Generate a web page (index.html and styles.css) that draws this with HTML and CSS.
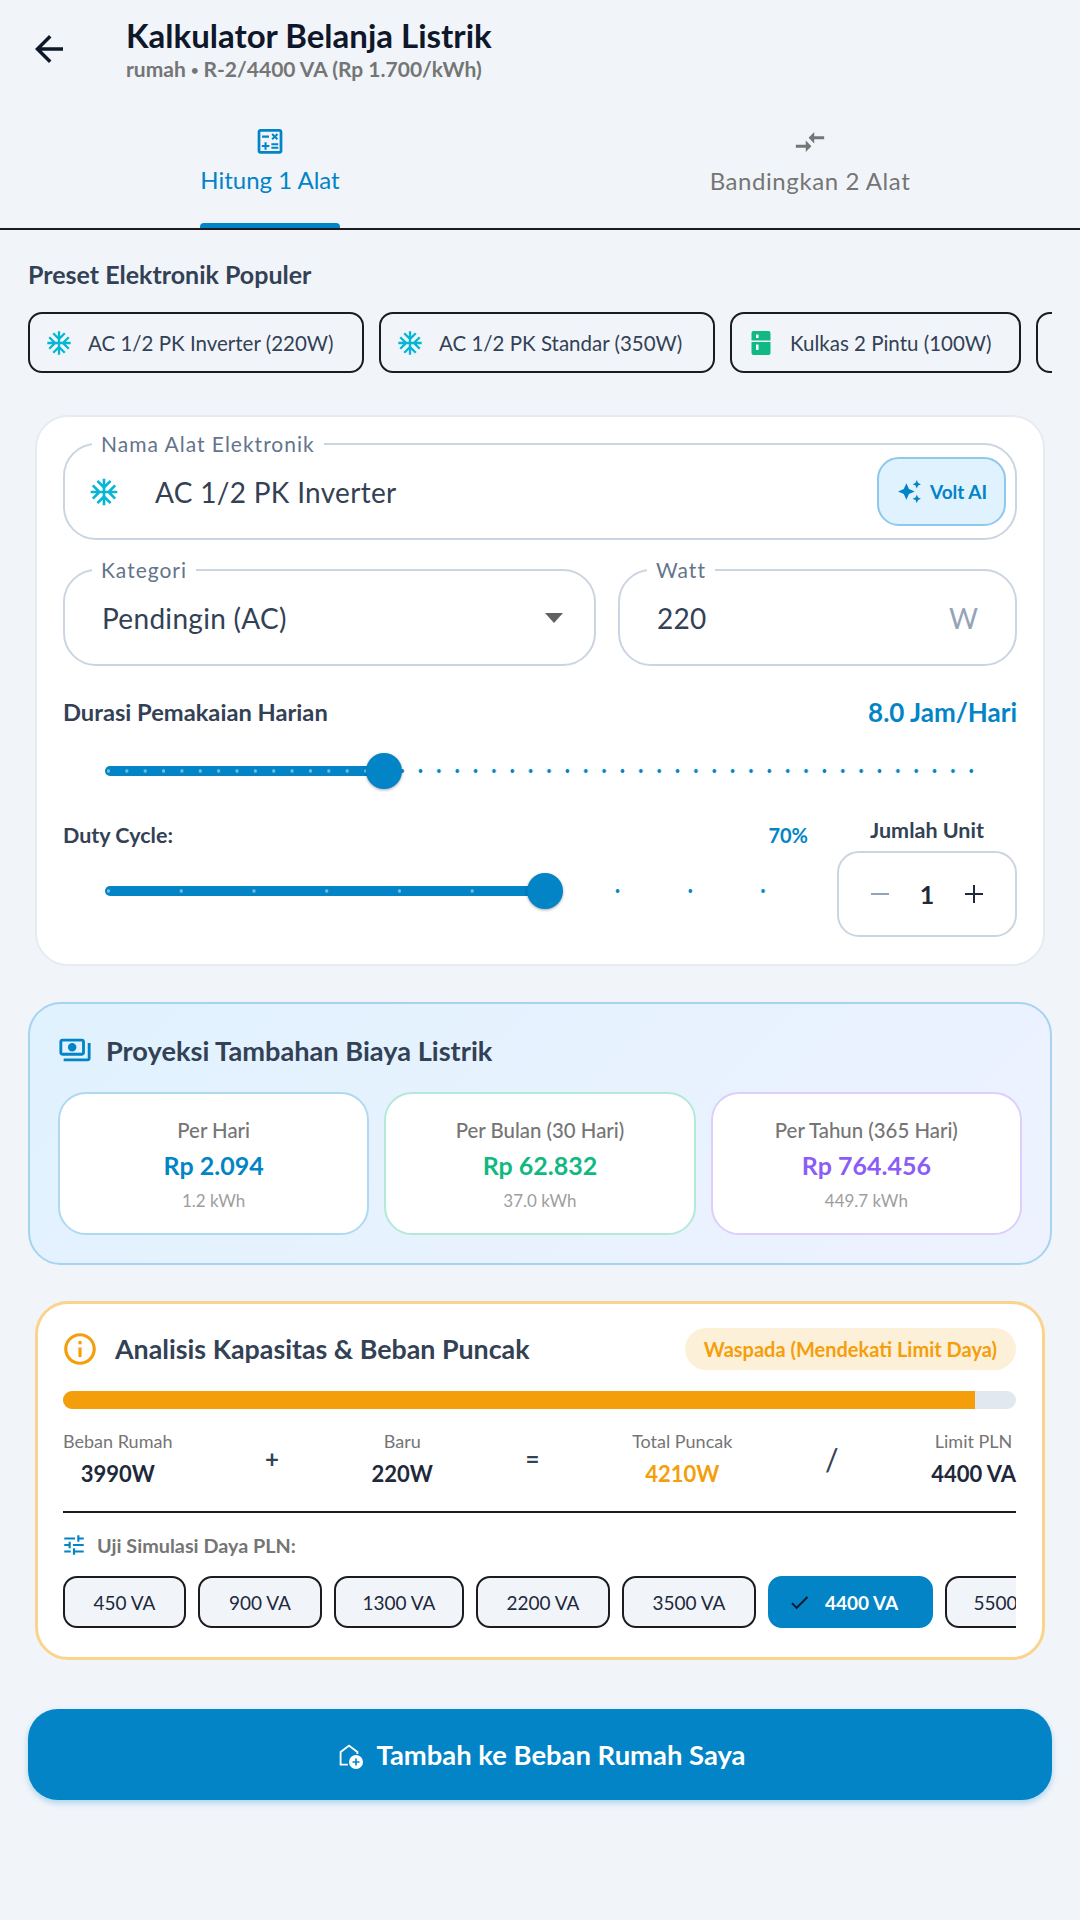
FILE: index.html
```html
<!DOCTYPE html>
<html lang="id">
<head>
    <meta charset="UTF-8">
    <meta name="viewport" content="width=device-width, initial-scale=1.0">
    <title>Kalkulator Belanja Listrik</title>
    <link rel="stylesheet" href="styles.css">
</head>
<body>
    <header class="app-bar">
        <svg class="back-icon" viewBox="0 0 24 24"><path d="M20 11H7.83l5.59-5.59L12 4l-8 8 8 8 1.41-1.41L7.83 13H20v-2z"/></svg>
        <div>
            <h1 class="app-title">Kalkulator Belanja Listrik</h1>
            <div class="app-subtitle">rumah <span class="dot">•</span> R-2/4400 VA (Rp 1.700/kWh)</div>
        </div>
    </header>

    <nav class="tabs">
        <div class="tab tab-active">
            <svg class="tab-icon" viewBox="0 0 24 24"><path d="M19 3H5c-1.1 0-2 .9-2 2v14c0 1.1.9 2 2 2h14c1.1 0 2-.9 2-2V5c0-1.1-.9-2-2-2zm0 16H5V5h14v14zM6.25 7.72h5v1.5h-5zM13 15.75h5v1.5h-5zm0-2.5h5v1.5h-5zM8 18h1.5v-2h2v-1.5h-2v-2H8v2H6V16h2zm6.09-7.05 1.41-1.41 1.41 1.41 1.06-1.06-1.41-1.42 1.41-1.41L16.91 6 15.5 7.41 14.09 6l-1.06 1.06 1.41 1.41-1.41 1.42z"/></svg>
            <span class="tab-label">Hitung 1 Alat</span>
        </div>
        <div class="tab">
            <svg class="tab-icon" viewBox="0 0 24 24"><path d="M9.01 14H2v2h7.01v3L13 15l-3.99-4v3zm5.98-1v-3H22V8h-7.01V5L11 9l3.99 4z"/></svg>
            <span class="tab-label">Bandingkan 2 Alat</span>
        </div>
    </nav>

    <main class="content">
        <h2 class="section-title">Preset Elektronik Populer</h2>
        <div class="preset-row">
            <div class="preset-chip chip-ac">
                <svg class="icon-snow" viewBox="0 0 24 24"><path d="M22 11h-4.17l3.24-3.24-1.41-1.42L15 11h-2V9l4.66-4.66-1.42-1.41L13 6.17V2h-2v4.17L7.76 2.93 6.34 4.34 11 9v2H9L4.34 6.34 2.93 7.76 6.17 11H2v2h4.17l-3.24 3.24 1.41 1.42L9 13h2v2l-4.66 4.66 1.42 1.41L11 17.83V22h2v-4.17l3.24 3.24 1.42-1.41L13 15v-2h2l4.66 4.66 1.41-1.42L17.83 13H22z"/></svg>
                AC 1/2 PK Inverter (220W)
            </div>
            <div class="preset-chip chip-ac">
                <svg class="icon-snow" viewBox="0 0 24 24"><path d="M22 11h-4.17l3.24-3.24-1.41-1.42L15 11h-2V9l4.66-4.66-1.42-1.41L13 6.17V2h-2v4.17L7.76 2.93 6.34 4.34 11 9v2H9L4.34 6.34 2.93 7.76 6.17 11H2v2h4.17l-3.24 3.24 1.41 1.42L9 13h2v2l-4.66 4.66 1.42 1.41L11 17.83V22h2v-4.17l3.24 3.24 1.42-1.41L13 15v-2h2l4.66 4.66 1.41-1.42L17.83 13H22z"/></svg>
                AC 1/2 PK Standar (350W)
            </div>
            <div class="preset-chip chip-fridge">
                <svg class="icon-fridge" viewBox="0 0 19 24"><path fill-rule="evenodd" d="M2 0h15a2 2 0 0 1 2 2v7.5H0V2a2 2 0 0 1 2-2zm2.5 3.5V7h2.6V3.5zM0 11h19v11a2 2 0 0 1-2 2H2a2 2 0 0 1-2-2zm4.5 2.5V19h2.6v-5.5z"/></svg>
                Kulkas 2 Pintu (100W)
            </div>
            <div class="preset-chip chip-ac"></div>
        </div>

        <section class="card form-card">
            <div class="field">
                <span class="field-label">Nama Alat Elektronik</span>
                <svg class="field-snow" viewBox="0 0 24 24"><path d="M22 11h-4.17l3.24-3.24-1.41-1.42L15 11h-2V9l4.66-4.66-1.42-1.41L13 6.17V2h-2v4.17L7.76 2.93 6.34 4.34 11 9v2H9L4.34 6.34 2.93 7.76 6.17 11H2v2h4.17l-3.24 3.24 1.41 1.42L9 13h2v2l-4.66 4.66 1.42 1.41L11 17.83V22h2v-4.17l3.24 3.24 1.42-1.41L13 15v-2h2l4.66 4.66 1.41-1.42L17.83 13H22z"/></svg>
                <span class="field-value">AC 1/2 PK Inverter</span>
                <div class="volt-btn">
                    <svg viewBox="0 0 24 24"><path d="M19 9l1.25-2.75L23 5l-2.75-1.25L19 1l-1.25 2.75L15 5l2.75 1.25L19 9zm-7.5.5L9 4 6.5 9.5 1 12l5.5 2.5L9 20l2.5-5.5L17 12l-5.5-2.5zM19 15l-1.25 2.75L15 19l2.75 1.25L19 23l1.25-2.75L23 19l-2.75-1.25L19 15z"/></svg>
                    Volt AI
                </div>
            </div>

            <div class="field-row">
                <div class="field field-category">
                    <span class="field-label">Kategori</span>
                    <span class="field-value">Pendingin (AC)</span>
                    <span class="caret"></span>
                </div>
                <div class="field field-watt">
                    <span class="field-label">Watt</span>
                    <span class="field-value">220</span>
                    <span class="field-unit">W</span>
                </div>
            </div>

            <div class="duration-head">
                <span class="slider-title">Durasi Pemakaian Harian</span>
                <span class="duration-value">8.0 Jam/Hari</span>
            </div>
            <div class="slider slider-hours">
                <div class="slider-fill" style="width: 279px"><div class="slider-thumb"></div></div>
            </div>

            <div class="duty-row">
                <div class="duty-col">
                    <div class="duty-head">
                        <span class="duty-title">Duty Cycle:</span>
                        <span class="duty-value">70%</span>
                    </div>
                    <div class="slider slider-duty">
                        <div class="slider-fill" style="width: 440px"><div class="slider-thumb"></div></div>
                    </div>
                </div>
                <div class="unit-col">
                    <div class="unit-title">Jumlah Unit</div>
                    <div class="stepper">
                        <span class="step-minus"></span>
                        <span class="step-count">1</span>
                        <span class="step-plus"></span>
                    </div>
                </div>
            </div>
        </section>

        <section class="projection">
            <div class="projection-head">
                <svg viewBox="0 0 24 24"><path d="M19 14V6c0-1.1-.9-2-2-2H3c-1.1 0-2 .9-2 2v8c0 1.1.9 2 2 2h14c1.1 0 2-.9 2-2zm-2 0H3V6h14v8zm-7-7c-1.66 0-3 1.34-3 3s1.34 3 3 3 3-1.34 3-3-1.34-3-3-3zm13 0v11c0 1.1-.9 2-2 2H4v-2h17V7h2z"/></svg>
                <h2 class="card-title">Proyeksi Tambahan Biaya Listrik</h2>
            </div>
            <div class="cost-grid">
                <div class="cost-card cost-day">
                    <div class="cost-label">Per Hari</div>
                    <div class="cost-value">Rp 2.094</div>
                    <div class="cost-kwh">1.2 kWh</div>
                </div>
                <div class="cost-card cost-month">
                    <div class="cost-label">Per Bulan (30 Hari)</div>
                    <div class="cost-value">Rp 62.832</div>
                    <div class="cost-kwh">37.0 kWh</div>
                </div>
                <div class="cost-card cost-year">
                    <div class="cost-label">Per Tahun (365 Hari)</div>
                    <div class="cost-value">Rp 764.456</div>
                    <div class="cost-kwh">449.7 kWh</div>
                </div>
            </div>
        </section>

        <section class="card capacity-card">
            <div class="capacity-head">
                <svg viewBox="0 0 24 24"><path d="M11 7h2v2h-2zm0 4h2v6h-2zm1-9C6.48 2 2 6.48 2 12s4.48 10 10 10 10-4.48 10-10S17.52 2 12 2zm0 18c-4.41 0-8-3.59-8-8s3.59-8 8-8 8 3.59 8 8-3.59 8-8 8z"/></svg>
                <h2 class="card-title">Analisis Kapasitas &amp; Beban Puncak</h2>
                <span class="badge">Waspada (Mendekati Limit Daya)</span>
            </div>
            <div class="progress"><div class="progress-fill" style="width: 95.7%"></div></div>

            <div class="stats">
                <div class="stat">
                    <div class="stat-label">Beban Rumah</div>
                    <div class="stat-value">3990W</div>
                </div>
                <span class="stat-op">+</span>
                <div class="stat">
                    <div class="stat-label">Baru</div>
                    <div class="stat-value">220W</div>
                </div>
                <span class="stat-op">=</span>
                <div class="stat">
                    <div class="stat-label">Total Puncak</div>
                    <div class="stat-value stat-warn">4210W</div>
                </div>
                <span class="stat-op stat-slash">/</span>
                <div class="stat">
                    <div class="stat-label">Limit PLN</div>
                    <div class="stat-value">4400 VA</div>
                </div>
            </div>

            <div class="sim-title">
                <svg viewBox="0 0 24 24"><path d="M3 17v2h6v-2H3zM3 5v2h10V5H3zm10 16v-2h8v-2h-8v-2h-2v6h2zM7 9v2H3v2h4v2h2V9H7zm14 4v-2H11v2h10zm-6-4h2V7h4V5h-4V3h-2v6z"/></svg>
                Uji Simulasi Daya PLN:
            </div>
            <div class="va-row">
                <div class="va-chip va-450">450 VA</div>
                <div class="va-chip va-900">900 VA</div>
                <div class="va-chip va-1300">1300 VA</div>
                <div class="va-chip va-2200">2200 VA</div>
                <div class="va-chip va-3500">3500 VA</div>
                <div class="va-chip va-selected">
                    <svg viewBox="0 0 24 24"><path d="M9 16.17 4.83 12l-1.42 1.41L9 19 21 7l-1.41-1.41z"/></svg>
                    4400 VA
                </div>
                <div class="va-chip va-5500">5500 VA</div>
            </div>
        </section>

        <button class="add-btn">
            <svg viewBox="0 0 24 24"><path d="M12 3 4 9v12h7v-1.6H5.6V9.8L12 5l6.4 4.8v1.4h1.6V9z"/><path fill-rule="evenodd" d="M18 12a6 6 0 1 0 0 12 6 6 0 0 0 0-12zm3 6.7h-2.3V21h-1.4v-2.3H15v-1.4h2.3V15h1.4v2.3H21z"/></svg>
            Tambah ke Beban Rumah Saya
        </button>
    </main>
</body>
</html>
```

FILE: styles.css
```css
* {
    box-sizing: border-box;
}

body {
    margin: 0;
    width: 1080px;
    height: 1920px;
    overflow: hidden;
    background-color: #f1f5fa;
    font-family: "Lato", "Noto Sans", sans-serif;
    color: #334155;
}

h1, h2 {
    margin: 0;
}

/* app bar */
.app-bar {
    display: flex;
    align-items: flex-start;
    height: 118px;
    padding: 17px 0 0 28px;
}

.back-icon {
    width: 42px;
    height: 42px;
    margin-top: 11px;
    margin-right: 56px;
    fill: #0f172a;
}

.app-title {
    font-size: 33px;
    line-height: 36px;
    font-weight: 700;
    color: #0f172a;
}

.app-subtitle {
    font-size: 21px;
    line-height: 31px;
    font-weight: 700;
    color: #757575;
}

.dot {
    font-size: 13px;
    vertical-align: 2px;
}

/* tabs */
.tabs {
    display: flex;
    height: 112px;
    border-bottom: 2px solid #1c1b1f;
}

.tab {
    flex: 1;
    display: flex;
    flex-direction: column;
    align-items: center;
    color: #757575;
    fill: #757575;
    padding-top: 7px;
}

.tab-icon {
    width: 34px;
    height: 34px;
}

.tab-label {
    margin-top: 6px;
    font-size: 24px;
    line-height: 32px;
    letter-spacing: 0.58px;
}

.tab-active {
    color: #0284c7;
    fill: #0284c7;
}

.tab-active .tab-label {
    position: relative;
    height: 66px;
    letter-spacing: 0;
}

.tab-active .tab-label::after {
    content: "";
    position: absolute;
    left: 0;
    right: 0;
    bottom: 0;
    height: 5px;
    background-color: #0284c7;
    border-radius: 4px 4px 0 0;
}

.content {
    padding: 0 28px;
}

.section-title {
    margin-top: 28px;
    font-size: 25px;
    line-height: 32px;
    font-weight: 700;
}

/* presets */
.preset-row {
    display: flex;
    gap: 15px;
    margin-top: 22px;
    overflow: hidden;
}

.preset-chip {
    flex-shrink: 0;
    display: flex;
    align-items: center;
    gap: 15px;
    height: 61px;
    padding-left: 15px;
    border: 2px solid #1c1b1f;
    border-radius: 14px;
    font-size: 20.5px;
    color: #334155;
    white-space: nowrap;
}

.chip-ac {
    width: 336px;
}

.chip-fridge {
    width: 291px;
}

.icon-snow {
    width: 28px;
    height: 28px;
    fill: #06b6d4;
}

.icon-fridge {
    width: 28px;
    height: 24px;
    fill: #10b981;
}

/* cards */
.card {
    margin: 42px 7px 0;
    background-color: white;
    border: 2px solid #e6ebf2;
    border-radius: 33px;
}

.form-card {
    height: 551px;
    padding: 26px 26px 0;
}

.field {
    position: relative;
    display: flex;
    align-items: center;
    height: 97px;
    border: 2px solid #cbd5e1;
    border-radius: 33px;
    padding-left: 37px;
}

.field-label {
    position: absolute;
    top: -12px;
    left: 27px;
    padding: 0 9px;
    background-color: white;
    font-size: 21px;
    line-height: 22px;
    letter-spacing: 1px;
    color: #64748b;
}

.field-snow {
    width: 32px;
    height: 32px;
    margin-left: -14px;
    margin-right: 35px;
    fill: #06b6d4;
}

.field-value {
    font-size: 28px;
    letter-spacing: 0.3px;
    color: #334155;
}

.volt-btn {
    display: flex;
    align-items: center;
    gap: 8px;
    margin-left: auto;
    margin-right: 9px;
    padding-left: 18px;
    height: 69px;
    width: 129px;
    border: 2px solid #8ec8ec;
    border-radius: 22px;
    background-color: #e0f2fe;
    font-size: 19px;
    font-weight: 700;
    color: #0284c7;
    white-space: nowrap;
}

.volt-btn svg {
    width: 25px;
    height: 25px;
    flex-shrink: 0;
    fill: #0284c7;
}

.field-row {
    display: flex;
    gap: 22px;
    margin-top: 29px;
}

.field-category {
    width: 533px;
}

.field-watt {
    flex: 1;
}

.caret {
    margin-left: auto;
    margin-right: 31px;
    border-left: 9px solid transparent;
    border-right: 9px solid transparent;
    border-top: 10px solid #616161;
}

.field-unit {
    margin-left: auto;
    margin-right: 37px;
    font-size: 28px;
    color: #94a3b8;
}

.duration-head {
    display: flex;
    justify-content: space-between;
    align-items: center;
    margin-top: 31px;
    height: 30px;
}

.slider-title {
    font-size: 23.7px;
    font-weight: 700;
}

.duration-value {
    font-size: 26px;
    font-weight: 700;
    color: #0284c7;
}

/* sliders */
.slider {
    position: relative;
    height: 6px;
    margin-left: 42px;
}

.slider-hours {
    width: 870px;
    margin-top: 41px;
    background-image: radial-gradient(circle, #0284c7 1.6px, transparent 2.2px);
    background-size: 18.37px 6px;
    background-position: -5.7px 0;
}

.slider-duty {
    width: 662px;
    margin-top: 38px;
    background-image: radial-gradient(circle, #0284c7 1.6px, transparent 2.2px);
    background-size: 72.74px 6px;
    background-position: -32.87px 0;
}

.slider-fill {
    position: absolute;
    top: -2px;
    left: 0;
    height: 10px;
    background-color: #0284c7;
    border-radius: 5px;
}

.slider-hours .slider-fill {
    background-image: radial-gradient(circle, rgba(255, 255, 255, 0.45) 1.4px, transparent 2px);
    background-size: 18.37px 10px;
    background-position: -5.7px 0;
}

.slider-duty .slider-fill {
    background-image: radial-gradient(circle, rgba(255, 255, 255, 0.45) 1.4px, transparent 2px);
    background-size: 72.74px 10px;
    background-position: -32.87px 0;
}

.slider-thumb {
    position: absolute;
    top: -13px;
    right: -18px;
    width: 36px;
    height: 36px;
    border-radius: 50%;
    background-color: #0284c7;
    box-shadow: 0 1px 3px rgba(0, 0, 0, 0.35);
}

.duty-row {
    display: flex;
    gap: 29px;
    margin-top: 46px;
}

.duty-col {
    width: 745px;
}

.duty-head {
    display: flex;
    justify-content: space-between;
    align-items: center;
    height: 30px;
}

.duty-title {
    font-size: 21.5px;
    font-weight: 700;
}

.duty-value {
    font-size: 20px;
    font-weight: 700;
    color: #0284c7;
}

.unit-col {
    flex: 1;
}

.unit-title {
    margin-top: -3px;
    text-align: center;
    font-size: 21.5px;
    line-height: 26px;
    font-weight: 700;
}

.stepper {
    display: flex;
    align-items: center;
    justify-content: space-between;
    height: 86px;
    margin-top: 8px;
    padding: 0 32px;
    border: 2px solid #cbd5e1;
    border-radius: 22px;
}

.step-minus {
    width: 18px;
    height: 2px;
    background-color: #94a3b8;
}

.step-plus {
    position: relative;
    width: 18px;
    height: 2px;
    background-color: #1e293b;
}

.step-plus::after {
    content: "";
    position: absolute;
    left: 8px;
    top: -8px;
    width: 2px;
    height: 18px;
    background-color: #1e293b;
}

.step-count {
    font-size: 25px;
    font-weight: 700;
    color: #1e293b;
}

/* projection */
.projection {
    height: 263px;
    margin-top: 36px;
    padding: 0 28px;
    border: 2px solid #a6d3f0;
    border-radius: 33px;
    background-image: linear-gradient(135deg, #e0f2fe, #eef2ff);
}

.projection-head {
    display: flex;
    align-items: center;
    gap: 14px;
    height: 48px;
    margin-top: 22px;
}

.projection-head svg {
    width: 34px;
    height: 34px;
    fill: #0284c7;
}

.card-title {
    font-size: 27.2px;
    font-weight: 700;
    color: #334155;
}

.cost-grid {
    display: grid;
    grid-template-columns: repeat(3, 1fr);
    gap: 15px;
    margin-top: 18px;
}

.cost-card {
    height: 143px;
    border: 2px solid;
    border-radius: 28px;
    background-color: white;
    text-align: center;
    padding-top: 23px;
}

.cost-label {
    font-size: 20.4px;
    line-height: 26px;
    font-weight: 500;
    color: #757575;
}

.cost-value {
    margin-top: 6px;
    font-size: 25px;
    line-height: 32px;
    font-weight: 700;
}

.cost-kwh {
    margin-top: 8px;
    font-size: 17px;
    line-height: 24px;
    color: #9e9e9e;
}

.cost-day {
    border-color: #b0d9f1;
}

.cost-day .cost-value {
    color: #0284c7;
}

.cost-month {
    border-color: #b4e9d6;
}

.cost-month .cost-value {
    color: #10b981;
}

.cost-year {
    border-color: #dccffb;
}

.cost-year .cost-value {
    color: #8b5cf6;
}

/* capacity */
.capacity-card {
    height: 359px;
    margin-top: 36px;
    padding: 0 26px 0 25px;
    border: 3px solid #fcd38d;
}

.capacity-head {
    display: flex;
    align-items: center;
    gap: 16px;
    height: 42px;
    margin-top: 24px;
}

.capacity-head svg {
    width: 38px;
    height: 38px;
    margin-left: -2px;
    fill: #f59e0b;
}

.capacity-head .card-title {
    font-size: 26.8px;
}

.badge {
    margin-left: auto;
    padding: 0 19px;
    height: 42px;
    line-height: 42px;
    border-radius: 21px;
    background-color: #fdf0d8;
    font-size: 20px;
    font-weight: 700;
    color: #f59e0b;
}

.progress {
    height: 18px;
    margin-top: 21px;
    border-radius: 9px;
    overflow: hidden;
    background-color: #e2e8f0;
}

.progress-fill {
    height: 100%;
    background-color: #f59e0b;
}

.stats {
    display: flex;
    justify-content: space-between;
    align-items: center;
    margin-top: 19px;
    padding-bottom: 22px;
    border-bottom: 2px solid #1c1b1f;
}

.stat {
    text-align: center;
}

.stat-label {
    font-size: 18px;
    line-height: 26px;
    color: #757575;
}

.stat-value {
    margin-top: 5px;
    font-size: 22px;
    line-height: 30px;
    font-weight: 700;
    color: #1e293b;
}

.stat-warn {
    color: #f59e0b;
}

.stat-op {
    font-size: 24px;
    font-weight: 700;
    color: #334155;
}

.stat-slash {
    font-size: 30px;
    font-weight: 400;
}

.sim-title {
    display: flex;
    align-items: center;
    gap: 10px;
    height: 27px;
    margin-top: 18px;
    font-size: 19.8px;
    font-weight: 700;
    color: #757575;
}

.sim-title svg {
    width: 26px;
    height: 26px;
    margin-left: -2px;
    fill: #0284c7;
}

.va-row {
    display: flex;
    gap: 12px;
    margin-top: 18px;
    overflow: hidden;
}

.va-chip {
    flex-shrink: 0;
    display: flex;
    align-items: center;
    justify-content: center;
    height: 52px;
    border: 2px solid #1c1b1f;
    border-radius: 14px;
    background-color: #f1f5fa;
    font-size: 19px;
    color: #1e293b;
}

.va-450 { width: 123px; }
.va-900 { width: 124px; }
.va-1300 { width: 130px; }
.va-2200 { width: 134px; }
.va-3500 { width: 134px; }
.va-5500 { width: 130px; }

.va-selected {
    justify-content: flex-start;
    gap: 14px;
    width: 165px;
    padding-left: 18px;
    border-color: #0284c7;
    background-color: #0284c7;
    color: white;
    font-weight: 700;
}

.va-selected svg {
    width: 23px;
    height: 23px;
    fill: #0f172a;
}

/* bottom button */
.add-btn {
    display: flex;
    align-items: center;
    justify-content: center;
    gap: 14px;
    width: 100%;
    height: 91px;
    margin-top: 49px;
    border: none;
    border-radius: 30px;
    background-color: #0284c7;
    box-shadow: 0 3px 6px rgba(2, 132, 199, 0.3);
    font-family: inherit;
    font-size: 27.4px;
    font-weight: 700;
    color: white;
}

.add-btn svg {
    width: 28px;
    height: 28px;
    fill: white;
}
```
